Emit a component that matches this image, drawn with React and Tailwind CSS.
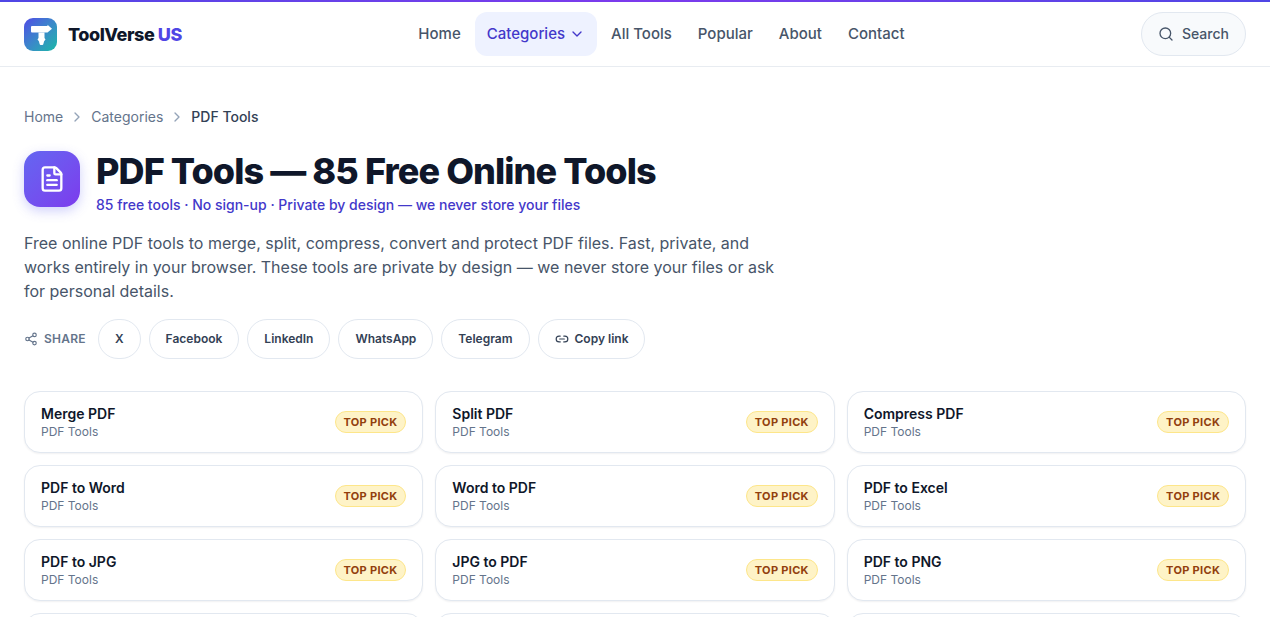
import { ChevronDown, ChevronRight, Search, FileText, Share2, Link2 } from "lucide-react";

const navLinks = ["Home", "Categories", "All Tools", "Popular", "About", "Contact"];
const shareLinks = ["X", "Facebook", "LinkedIn", "WhatsApp", "Telegram"];
const tools = [
  "Merge PDF", "Split PDF", "Compress PDF",
  "PDF to Word", "Word to PDF", "PDF to Excel",
  "PDF to JPG", "JPG to PDF", "PDF to PNG",
  "PNG to PDF", "Rotate PDF", "Protect PDF",
];

function Logo() {
  return (
    <div className="w-[33px] h-[33px] rounded-[9px] bg-gradient-to-br from-[#4f46e5] to-[#14b8a6] flex items-center justify-center">
      <svg width="33" height="33" viewBox="0 0 33 33" fill="#fff">
        <path d="M8 8h15.5V6.8l4.5 4-4.5 3.7H8a1 1 0 0 1-1-1V9a1 1 0 0 1 1-1z" />
        <path d="M14.5 14.5h6V20l1 1.5-1.4 1.8-.8 3a1 1 0 0 1-1 .7h-1.6a1 1 0 0 1-1-.7l-.8-3-1.4-1.8 1-1.5z" />
      </svg>
    </div>
  );
}

function ToolCard({ name }) {
  return (
    <a className="h-[62px] px-4 flex items-center justify-between bg-white border border-[#e2e8f0] rounded-2xl shadow-[0_1px_2px_rgba(15,23,42,0.06)]">
      <div className="flex flex-col">
        <span className="text-sm leading-[18px] font-semibold text-[#0f172a]">{name}</span>
        <span className="mt-px text-xs leading-4 text-[#64748b]">PDF Tools</span>
      </div>
      <span className="h-[22px] px-[7.8px] flex items-center rounded-full bg-[#fef3c7] border border-[#fde68a] text-[11px] font-bold tracking-[0.03em] text-[#92400e]">
        TOP PICK
      </span>
    </a>
  );
}

export default function App() {
  return (
    <div className="h-screen overflow-hidden bg-white font-['Inter',sans-serif]">
      <div className="h-0.5 bg-gradient-to-r from-[#4f46e5] via-[#7c3aed] to-[#4f46e5]" />
      <header className="h-[65px] px-6 flex items-center justify-between border-b border-[#e8ecf1]">
        <div className="flex items-center gap-[11px]">
          <Logo />
          <span className="text-[18px] font-extrabold tracking-tight text-[#0f172a]">
            ToolVerse <span className="text-[#4f46e5]">US</span>
          </span>
        </div>
        <nav className="flex items-center gap-0.5">
          {navLinks.map((link) =>
            link === "Categories" ? (
              <a key={link} className="h-11 px-3 flex items-center gap-1 rounded-xl bg-[#eef2ff] text-[15px] font-medium text-[#4338ca]">
                {link}
                <ChevronDown size={16} />
              </a>
            ) : (
              <a key={link} className="h-11 px-3 flex items-center text-[15px] font-medium text-[#475569]">
                {link}
              </a>
            )
          )}
        </nav>
        <button className="h-[44px] w-[105px] flex items-center justify-center gap-2 rounded-full border border-[#e2e8f0] bg-[#f8fafc] text-sm font-medium text-[#475569]">
          <Search size={16} />
          Search
        </button>
      </header>

      <main className="px-6 pt-[41px]">
        <div className="h-[18px] flex items-center text-sm text-[#64748b]">
          <a>Home</a>
          <ChevronRight size={16} className="mx-1.5 text-[#94a3b8]" />
          <a>Categories</a>
          <ChevronRight size={16} className="mx-1.5 text-[#94a3b8]" />
          <span className="font-medium text-[#334155]">PDF Tools</span>
        </div>

        <div className="mt-[25px] flex items-start gap-4">
          <div className="w-14 h-14 rounded-2xl bg-gradient-to-br from-[#6366f1] to-[#7c3aed] shadow-[0_4px_12px_rgba(99,102,241,0.3)] flex items-center justify-center text-white">
            <FileText size={28} strokeWidth={2} />
          </div>
          <div>
            <h1 className="text-[36px] leading-10 font-extrabold tracking-tight text-[#0f172a]">
              PDF Tools — 85 Free Online Tools
            </h1>
            <p className="mt-1 text-sm leading-5 font-medium text-[#4338ca]">
              85 free tools · No sign-up · Private by design — we never store your files
            </p>
          </div>
        </div>

        <p className="mt-4 max-w-[760px] text-base leading-6 text-[#475569]">
          Free online PDF tools to merge, split, compress, convert and protect PDF files. Fast, private, and works entirely in your browser. These tools are private by design — we never store your files or ask for personal details.
        </p>

        <div className="mt-4 flex items-center gap-2">
          <span className="mr-[4.2px] flex items-center gap-1.5 text-xs font-semibold tracking-[0.02em] text-[#64748b]">
            <Share2 size={14} />
            SHARE
          </span>
          {shareLinks.map((s) => (
            <a key={s} className="h-10 px-4 flex items-center rounded-full border border-[#e2e8f0] bg-white text-xs font-semibold text-[#334155]">
              {s}
            </a>
          ))}
          <a className="h-10 px-4 flex items-center gap-1.5 rounded-full border border-[#e2e8f0] bg-white text-xs font-semibold text-[#334155]">
            <Link2 size={14} />
            Copy link
          </a>
        </div>

        <div className="mt-8 grid grid-cols-3 gap-3">
          {tools.map((t) => (
            <ToolCard key={t} name={t} />
          ))}
        </div>
      </main>
    </div>
  );
}
